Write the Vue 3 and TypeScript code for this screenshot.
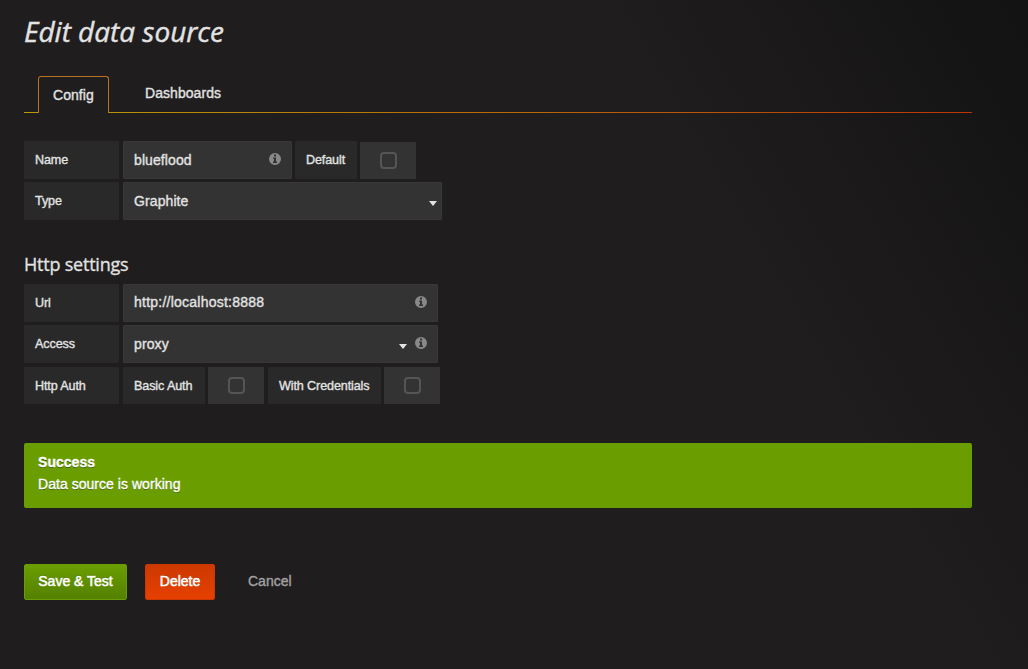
<script setup lang="ts">
import { reactive, ref } from 'vue'

const tabs = ['Config', 'Dashboards']
const activeTab = ref('Config')
const source = reactive({
  name: 'blueflood',
  isDefault: false,
  type: 'Graphite',
  url: 'http://localhost:8888',
  access: 'proxy',
  basicAuth: false,
  withCredentials: false,
})
const infoPath =
  'M6 0a6 6 0 1 1 0 12A6 6 0 0 1 6 0ZM5 1.5v1.9h2V1.5ZM4 4.4v1.3h1v2.9H4v1.4h4V8.6H7V4.4Z'
</script>

<template>
  <main class="page">
    <h1>Edit data source</h1>
    <nav class="tabs">
      <a
        v-for="tab in tabs"
        :key="tab"
        class="tab"
        :class="{ active: tab === activeTab }"
        @click="activeTab = tab"
      >{{ tab }}</a>
    </nav>

    <section class="group basics">
      <div class="row">
        <span class="label key">Name</span>
        <div class="field name"><span>{{ source.name }}</span>
          <svg class="info" viewBox="0 0 12 12"><path fill-rule="evenodd" :d="infoPath" /></svg>
        </div>
        <span class="label default">Default</span>
        <button class="switch" @click="source.isDefault = !source.isDefault"><i /></button>
      </div>
      <div class="row">
        <span class="label key">Type</span>
        <div class="field type"><span>{{ source.type }}</span><b class="caret" /></div>
      </div>
    </section>

    <h2>Http settings</h2>
    <section class="group http">
      <div class="row">
        <span class="label key">Url</span>
        <div class="field url"><span>{{ source.url }}</span>
          <svg class="info" viewBox="0 0 12 12"><path fill-rule="evenodd" :d="infoPath" /></svg>
        </div>
      </div>
      <div class="row">
        <span class="label key">Access</span>
        <div class="field access"><span>{{ source.access }}</span><b class="caret" />
          <svg class="info" viewBox="0 0 12 12"><path fill-rule="evenodd" :d="infoPath" /></svg>
        </div>
      </div>
      <div class="row auth">
        <span class="label key">Http Auth</span>
        <span class="label basic">Basic Auth</span>
        <button class="switch" @click="source.basicAuth = !source.basicAuth"><i /></button>
        <span class="label creds">With Credentials</span>
        <button class="switch" @click="source.withCredentials = !source.withCredentials"><i /></button>
      </div>
    </section>

    <div class="alert">
      <strong>Success</strong>
      <span>Data source is working</span>
    </div>

    <div class="actions">
      <button class="btn save">Save &amp; Test</button>
      <button class="btn delete">Delete</button>
      <a class="cancel">Cancel</a>
    </div>
  </main>
</template>

<style>
body {
  background: #1f1d1e;
}
</style>

<style scoped>
.page {
  box-sizing: border-box;
  width: 1028px;
  height: 669px;
  padding: 11px 56px 0 24px;
  overflow: hidden;
  background: linear-gradient(60deg, transparent 70%, #141313 98%), #1f1d1e;
  color: #e3e3e3;
  font: 14px/20px 'Liberation Sans', Arial, sans-serif;
  -webkit-text-stroke: 0.35px currentColor;
}
h1 {
  margin: 0;
  height: 65px;
  font: italic 400 28px/40px 'Open Sans', sans-serif;
  letter-spacing: -0.02px;
  -webkit-text-stroke: 0.4px currentColor;
}
h2 {
  margin: -1px 0 0;
  height: 33px;
  font: 400 18px/26px 'Open Sans', sans-serif;
  letter-spacing: -0.22px;
  -webkit-text-stroke: 0.3px currentColor;
}
.tabs {
  display: flex;
  height: 36px;
  padding-left: 14px;
  border-bottom: 1px solid;
  border-image: linear-gradient(to right, #b99b06, #b93708) 1;
}
.tab {
  box-sizing: border-box;
  height: 36px;
  width: 112px;
  padding-left: 36px;
  line-height: 34px;
  letter-spacing: 0.06px;
}
.tab.active {
  width: 71px;
  height: 37px;
  padding-left: 14px;
  border: 1px solid #b97221;
  border-bottom: 0;
  border-radius: 3px 3px 0 0;
  background: #1f1d1e;
  line-height: 36px;
}
.group {
  display: flex;
  flex-direction: column;
  gap: 3px;
}
.basics {
  padding-top: 28px;
  height: 111px;
}
.http {
  height: 159px;
}
.row {
  display: flex;
  align-items: flex-end;
}
.auth {
  margin-top: 1px;
}
.label {
  box-sizing: border-box;
  height: 38px;
  padding-left: 11px;
  border-radius: 1px;
  background: #292929;
  font-size: 12.6px;
  letter-spacing: -0.12px;
  line-height: 38px;
  white-space: nowrap;
}
.auth .label {
  height: 37px;
}
.key {
  width: 95px;
  margin-right: 4px;
}
.default {
  width: 62px;
  margin: 0 3px;
}
.basic {
  width: 82px;
  margin-right: 3px;
}
.creds {
  width: 113px;
  margin: 0 3px 0 4px;
}
.field {
  box-sizing: border-box;
  display: flex;
  align-items: center;
  height: 38px;
  padding: 0 11px 0 10px;
  border: 1px solid #383838;
  border-radius: 1px;
  background: #333;
}
.field span {
  flex: 1;
  letter-spacing: 0.1px;
}
.name {
  width: 169px;
}
.type {
  width: 319px;
  padding-right: 4px;
}
.url,
.access {
  width: 315px;
}
.url span {
  padding-bottom: 2px;
  letter-spacing: 0.24px;
}
.info {
  width: 12px;
  height: 12px;
  margin: 0 -1px 2px 0;
  fill: #888;
}
.caret {
  margin-top: 4px;
  border: 4px solid transparent;
  border-top: 5px solid #e3e3e3;
  border-bottom: 0;
}
.access .caret {
  margin-right: 8px;
}
.switch {
  display: flex;
  align-items: center;
  justify-content: center;
  width: 56px;
  height: 37px;
  padding: 0;
  border: 0;
  background: #333;
}
.switch i {
  box-sizing: border-box;
  width: 17px;
  height: 17px;
  border: 2px solid #555;
  border-radius: 4px;
}
.alert {
  box-sizing: border-box;
  display: flex;
  flex-direction: column;
  height: 65px;
  padding: 8px 14px;
  border-radius: 2px;
  background: #6a9e00;
  color: #fff;
  line-height: 22px;
  letter-spacing: 0.04px;
  text-shadow: 0 1px 0 rgba(0, 0, 0, 0.5);
}
.actions {
  display: flex;
  padding-top: 56px;
}
.btn {
  height: 36px;
  padding: 0 0 2px;
  border: 1px solid;
  border-radius: 2px;
  color: #fff;
  font: inherit;
  line-height: 32px;
  text-shadow: 0 -1px 0 rgba(0, 0, 0, 0.25);
  -webkit-text-stroke: 0.5px currentColor;
}
.save {
  width: 103px;
  margin-right: 18px;
  border-color: #6a9e00;
  background: linear-gradient(#6a9e00, #548000);
}
.delete {
  width: 70px;
  border-color: #cc3900;
  background: linear-gradient(#cc3900, #e64000);
}
.cancel {
  margin-left: 33px;
  color: #a3a3a3;
  line-height: 35px;
}
</style>
